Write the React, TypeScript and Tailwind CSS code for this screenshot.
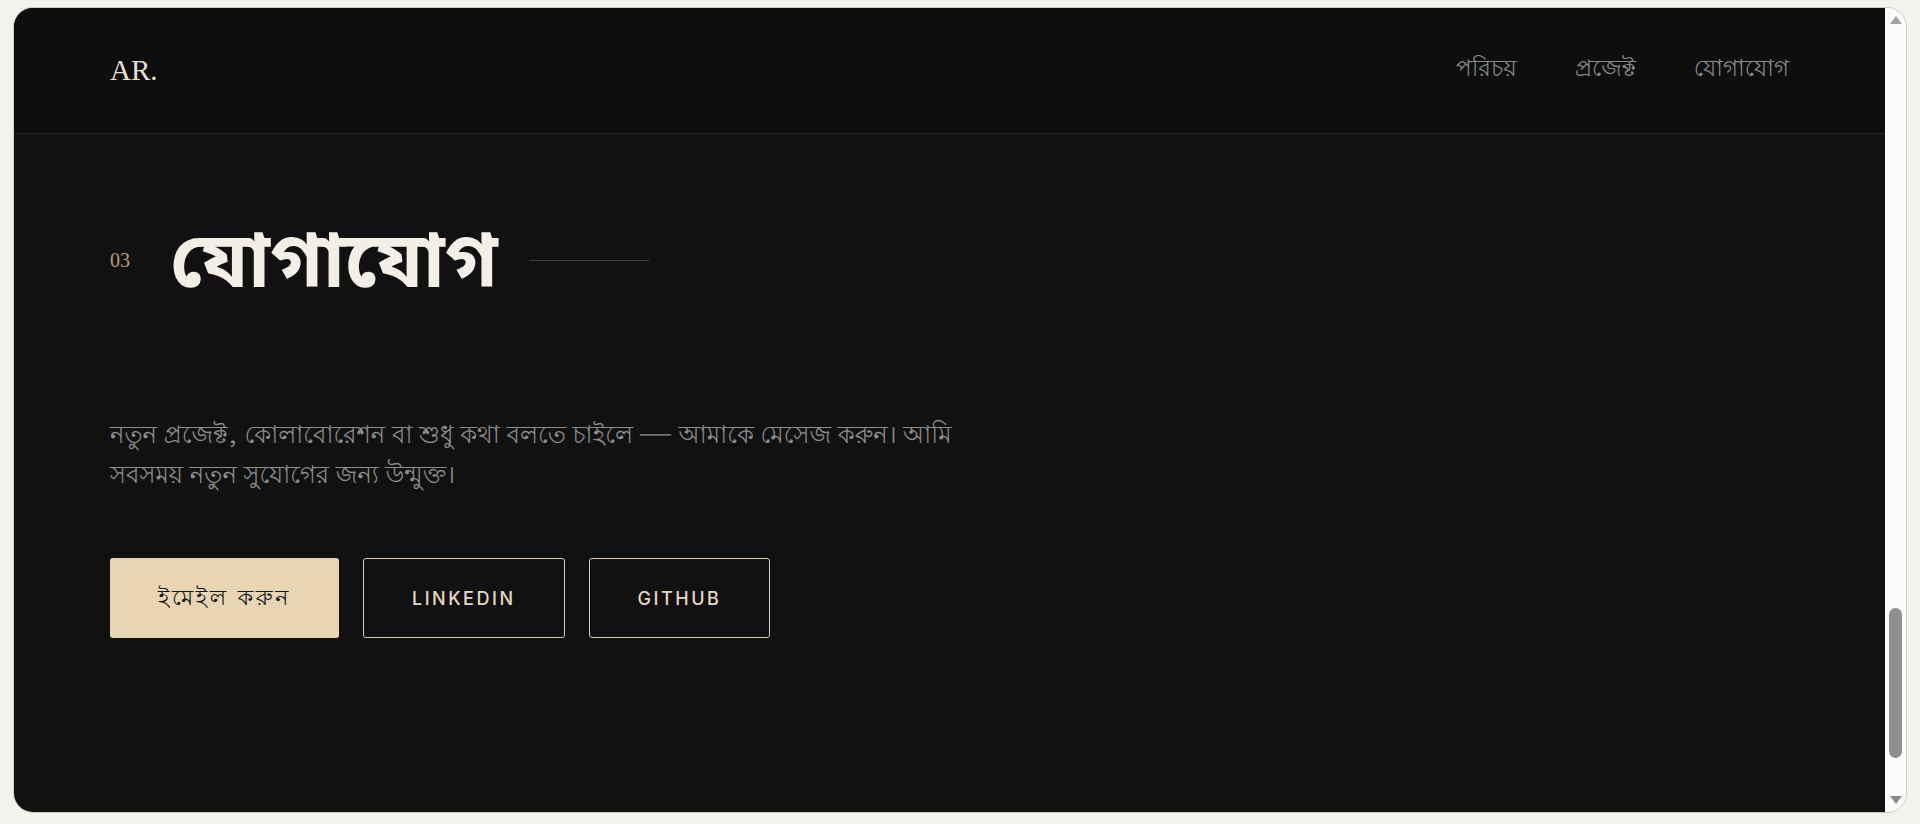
import React from "react";

const bn = { fontFamily: '"Lohit Bengali", "Noto Sans Bengali", "Hind Siliguri", "Noto Sans", sans-serif' };
const bnBold = { fontFamily: '"Noto Sans Bengali", "Hind Siliguri", "Noto Sans", sans-serif' };
const serif = { fontFamily: '"Liberation Serif", "DejaVu Serif", serif' };
const sans = { fontFamily: 'Inter, "Noto Sans", sans-serif' };

export default function App() {
  return (
    <div className="h-[824px] w-full bg-[#f4f2ec] pt-[7px] px-[13px] pb-[11px]">
      <div className="flex h-[806px] overflow-hidden rounded-[20px] border border-[#cfcdc6]">
        <div className="flex flex-1 flex-col bg-[#111111]">
          <header className="flex h-[126px] shrink-0 items-center justify-between border-b border-[#262626] bg-[#0e0e0f] px-[96px]">
            <div className="text-[29px] text-[#e9dfcc]" style={serif}>AR.</div>
            <nav className="flex items-center gap-[58px] text-[23px] font-light text-[#8a8a8a]" style={bn}>
              <span>পরিচয়</span>
              <span>প্রজেক্ট</span>
              <span>যোগাযোগ</span>
            </nav>
          </header>
          <section className="flex-1 px-[96px] pt-[81px]">
            <div className="flex h-[90px] items-center">
              <span className="mr-10 text-[20px] text-[#b79d74]" style={serif}>03</span>
              <h1 className="mr-[31px] pt-[15px] text-[77px] font-bold leading-none text-[#f3efe6]" style={bnBold}>যোগাযোগ</h1>
              <div className="h-px w-[120px] bg-[#3a3a3a]" />
            </div>
            <p className="mt-[111px] max-w-[880px] text-[24.2px] font-light leading-[40px] text-[#8c8c8c]" style={bn}>
              নতুন প্রজেক্ট, কোলাবোরেশন বা শুধু কথা বলতে চাইলে — আমাকে মেসেজ করুন। আমি সবসময় নতুন সুযোগের জন্য উন্মুক্ত।
            </p>
            <div className="mt-[62px] flex gap-6">
              <a className="flex h-[80px] items-center rounded-[3px] bg-[#e8d5b3] px-12 text-[22px] tracking-[0.12em] text-[#151515]" style={bn}>
                ইমেইল করুন
              </a>
              <a className="flex h-[80px] items-center rounded-[3px] border border-[#d8c9ae] px-12 text-[18px] font-medium uppercase tracking-[0.14em] text-[#e6d8bf]" style={sans}>
                LinkedIn
              </a>
              <a className="flex h-[80px] items-center rounded-[3px] border border-[#d8c9ae] px-12 text-[18px] font-medium uppercase tracking-[0.14em] text-[#e6d8bf]" style={sans}>
                GitHub
              </a>
            </div>
          </section>
        </div>
        <div className="relative flex w-[21px] shrink-0 flex-col items-center bg-[#fbfbfb]">
          <svg className="mt-[8px]" width="12" height="8" viewBox="0 0 12 8">
            <polygon points="6,0 12,8 0,8" fill="#a3a3a3" />
          </svg>
          <div className="flex-1" />
          <div className="absolute left-[4px] top-[600px] h-[150px] w-[13px] rounded-full bg-[#8f8f8f]" />
          <svg className="mb-[8px]" width="12" height="8" viewBox="0 0 12 8">
            <polygon points="0,0 12,0 6,8" fill="#8a8a8a" />
          </svg>
        </div>
      </div>
    </div>
  );
}
